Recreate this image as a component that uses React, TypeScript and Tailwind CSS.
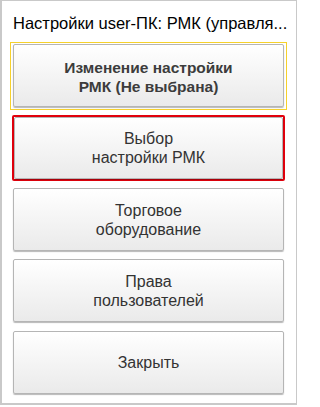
import React from "react";

type Btn = { lines: string[]; kind?: "default" | "current"; mt: string };

const buttons: Btn[] = [
    { lines: ["Изменение настройки", "РМК (Не выбрана)"], kind: "default", mt: "mt-0" },
    { lines: ["Выбор", "настройки РМК"], kind: "current", mt: "mt-[5px]" },
    { lines: ["Торговое", "оборудование"], mt: "mt-[7px]" },
    { lines: ["Права", "пользователей"], mt: "mt-[8px]" },
    { lines: ["Закрыть"], mt: "mt-[9px]" },
];

function FormButton({ lines, kind, mt }: Btn) {
    const base =
        "w-full flex flex-col items-center justify-center rounded-[2px] border border-[#b5b5b5] bg-gradient-to-b from-white to-[#eaeaea] shadow-[0_1px_1px_rgba(0,0,0,0.28)] leading-[19px]";
    const text =
        kind === "default" ? "pt-[3px] text-[15.5px] font-bold text-[#3c3c3c]" : "text-[16px] text-[#333333]";
    const h = kind === "current" ? "h-[62px]" : "h-[63px]";

    const btn = (
        <button className={`${base} ${text} ${h}`}>
            {lines.map((l) => (
                <span key={l}>{l}</span>
            ))}
        </button>
    );

    // кнопка по умолчанию — жёлтая рамка
    if (kind === "default") {
        return <div className={`${mt} border border-[#f6d12c] px-[2px] pt-[1px] pb-[2px]`}>{btn}</div>;
    }
    // текущий элемент — красная рамка
    if (kind === "current") {
        return <div className={`${mt} mx-[2px] rounded-[2px] border-2 border-[#e1000c]`}>{btn}</div>;
    }
    return <div className={`${mt} mx-[3px]`}>{btn}</div>;
}

export default function App() {
    return (
        <div className="w-[300px] h-[407px] bg-white" style={{ fontFamily: '"Liberation Sans", Arial, sans-serif' }}>
            <div className="w-[297px] h-[405px] border-2 border-t border-r border-[#c9c9c9] bg-white">
                <div className="h-[41px] pl-[11px] pt-[12px] text-[16.5px] leading-[20px] text-black whitespace-nowrap overflow-hidden">
                    Настройки user-ПК: РМК (управля...
                </div>
                <div className="flex flex-col pl-[8px] pr-[9px]">
                    {buttons.map((b) => (
                        <FormButton key={b.lines.join()} {...b} />
                    ))}
                </div>
            </div>
        </div>
    );
}
